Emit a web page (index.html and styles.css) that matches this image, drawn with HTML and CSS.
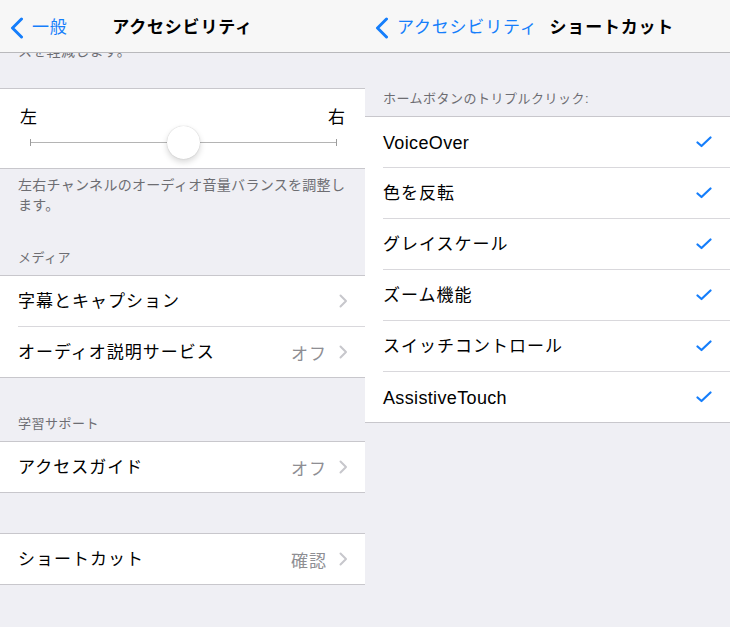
FILE: index.html
```html
<!DOCTYPE html>
<html lang="ja">
<head>
  <meta charset="UTF-8">
  <title>アクセシビリティ</title>
  <link rel="stylesheet" href="styles.css">
</head>
<body>
  <div class="screens">
    <!-- Accessibility settings -->
    <section class="screen">
      <header class="navbar">
        <a class="nav-back">
          <svg class="back-chevron" width="14" height="22" viewBox="0 0 14 22"><path d="M11.5 2 L2.5 11 L11.5 20"/></svg>
          <span>一般</span>
        </a>
        <h1 class="nav-title">アクセシビリティ</h1>
      </header>

      <div class="peek"><p class="group-footer">スを軽減します。</p></div>

      <div class="group balance">
        <div class="balance-labels"><span>左</span><span>右</span></div>
        <div class="slider">
          <div class="slider-track"></div>
          <div class="slider-thumb"></div>
        </div>
      </div>
      <p class="group-footer">左右チャンネルのオーディオ音量バランスを調整し<br>ます。</p>

      <h2 class="group-header first">メディア</h2>
      <div class="group">
        <div class="cell">
          <div class="cell-inner">
            <span class="cell-label">字幕とキャプション</span>
            <svg class="disclosure" width="9" height="14" viewBox="0 0 9 14"><path d="M1.5 1.5 L7 7 L1.5 12.5"/></svg>
          </div>
        </div>
        <div class="cell">
          <div class="cell-inner">
            <span class="cell-label">オーディオ説明サービス</span>
            <span class="cell-value">オフ</span>
            <svg class="disclosure" width="9" height="14" viewBox="0 0 9 14"><path d="M1.5 1.5 L7 7 L1.5 12.5"/></svg>
          </div>
        </div>
      </div>

      <h2 class="group-header">学習サポート</h2>
      <div class="group">
        <div class="cell">
          <div class="cell-inner">
            <span class="cell-label">アクセスガイド</span>
            <span class="cell-value">オフ</span>
            <svg class="disclosure" width="9" height="14" viewBox="0 0 9 14"><path d="M1.5 1.5 L7 7 L1.5 12.5"/></svg>
          </div>
        </div>
      </div>

      <div class="group spaced">
        <div class="cell">
          <div class="cell-inner">
            <span class="cell-label">ショートカット</span>
            <span class="cell-value">確認</span>
            <svg class="disclosure" width="9" height="14" viewBox="0 0 9 14"><path d="M1.5 1.5 L7 7 L1.5 12.5"/></svg>
          </div>
        </div>
      </div>
    </section>

    <!-- Shortcut selection -->
    <section class="screen">
      <header class="navbar navbar-left">
        <a class="nav-back">
          <svg class="back-chevron" width="14" height="22" viewBox="0 0 14 22"><path d="M11.5 2 L2.5 11 L11.5 20"/></svg>
          <span>アクセシビリティ</span>
        </a>
        <h1 class="nav-title">ショートカット</h1>
      </header>

      <h2 class="group-header">ホームボタンのトリプルクリック:</h2>
      <div class="group">
        <div class="cell"><div class="cell-inner"><span class="cell-label latin">VoiceOver</span><svg class="check" width="16" height="12" viewBox="0 0 16 12"><path d="M1.5 6.5 L5.5 10 L14.5 1.5"/></svg></div></div>
        <div class="cell"><div class="cell-inner"><span class="cell-label">色を反転</span><svg class="check" width="16" height="12" viewBox="0 0 16 12"><path d="M1.5 6.5 L5.5 10 L14.5 1.5"/></svg></div></div>
        <div class="cell"><div class="cell-inner"><span class="cell-label">グレイスケール</span><svg class="check" width="16" height="12" viewBox="0 0 16 12"><path d="M1.5 6.5 L5.5 10 L14.5 1.5"/></svg></div></div>
        <div class="cell"><div class="cell-inner"><span class="cell-label">ズーム機能</span><svg class="check" width="16" height="12" viewBox="0 0 16 12"><path d="M1.5 6.5 L5.5 10 L14.5 1.5"/></svg></div></div>
        <div class="cell"><div class="cell-inner"><span class="cell-label">スイッチコントロール</span><svg class="check" width="16" height="12" viewBox="0 0 16 12"><path d="M1.5 6.5 L5.5 10 L14.5 1.5"/></svg></div></div>
        <div class="cell"><div class="cell-inner"><span class="cell-label latin">AssistiveTouch</span><svg class="check" width="16" height="12" viewBox="0 0 16 12"><path d="M1.5 6.5 L5.5 10 L14.5 1.5"/></svg></div></div>
      </div>
    </section>
  </div>
</body>
</html>
```

FILE: styles.css
```css
* { box-sizing: border-box; margin: 0; padding: 0; }
html, body {
  width: 100%;
  height: 100%;
  background: #efeff4;
  font-family: "Liberation Sans", "Noto Sans CJK JP", sans-serif;
  color: #000;
  overflow: hidden;
}

.screens {
  display: flex;
  height: 627px;
}

.screen {
  width: 365px;
  flex-shrink: 0;
  background: #efeff4;
}

/* Navigation bar */
.navbar {
  height: 53px;
  padding-top: 4px;
  background: #f7f7f7;
  border-bottom: 1px solid #b9b9bc;
  display: grid;
  grid-template-columns: 1fr auto 1fr;
  align-items: center;
}
.navbar-left {
  display: flex;
}

.nav-back {
  display: flex;
  align-items: center;
  gap: 8px;
  padding-left: 10px;
  color: #157efb;
  font-size: 17px;
  letter-spacing: 0.8px;
  line-height: 22px;
}
.back-chevron path {
  fill: none;
  stroke: #157efb;
  stroke-width: 3;
  stroke-linecap: round;
  stroke-linejoin: round;
}

.nav-title {
  font-size: 17px;
  font-weight: 700;
  letter-spacing: 0.8px;
  line-height: 22px;
}
.navbar-left .nav-title { margin-left: 12px; }

/* Partially scrolled text under the bar */
.peek {
  height: 8px;
  overflow: hidden;
  margin-bottom: 27px;
}
.peek .group-footer { margin-top: -18px; }

/* Groups and cells */
.group {
  background: #fff;
  border-top: 1px solid #c8c7cc;
  border-bottom: 1px solid #c8c7cc;
}
.group.spaced { margin-top: 40px; }

.group-header {
  padding: 38px 18px 9px;
  font-size: 13px;
  font-weight: 400;
  letter-spacing: 0.5px;
  line-height: 16px;
  color: #6d6d72;
}
.group-header.first { padding-top: 35px; }

.group-footer {
  padding: 6px 16px 0 18px;
  font-size: 14px;
  letter-spacing: 0.3px;
  line-height: 20px;
  color: #6d6d72;
  white-space: nowrap;
}

.cell { padding-left: 18px; }
.cell-inner {
  height: 51px;
  display: flex;
  align-items: center;
  padding-right: 17px;
  border-bottom: 1px solid #d9d8dc;
}
.cell:last-child .cell-inner {
  height: 50px;
  border-bottom: none;
}

.cell-label {
  flex: 1;
  font-size: 17px;
  letter-spacing: 1px;
  line-height: 22px;
  padding-top: 1px;
}
.cell-label.latin {
  font-size: 18px;
  letter-spacing: 0.35px;
}

.cell-value {
  font-size: 17px;
  letter-spacing: 1px;
  color: #8e8e93;
  margin-right: 12px;
  padding-top: 1px;
}

.disclosure path {
  fill: none;
  stroke: #c7c7cc;
  stroke-width: 2;
  stroke-linecap: round;
  stroke-linejoin: round;
}

.check { margin-right: 1px; }
.check path {
  fill: none;
  stroke: #157efb;
  stroke-width: 2.2;
  stroke-linecap: round;
  stroke-linejoin: round;
}

/* Balance slider */
.balance { padding: 19px 20px 12px; }
.balance-labels {
  display: flex;
  justify-content: space-between;
  font-size: 17px;
  line-height: 20px;
}
.slider {
  position: relative;
  height: 28px;
  margin: 0 8px 0 10px;
  display: flex;
  align-items: center;
}
.slider-track {
  position: relative;
  width: 100%;
  height: 1px;
  background: #b4b4b4;
}
.slider-track::before,
.slider-track::after {
  content: "";
  position: absolute;
  top: -3px;
  width: 1px;
  height: 7px;
  background: #9c9c9c;
}
.slider-track::before { left: 0; }
.slider-track::after { right: 0; }

.slider-thumb {
  position: absolute;
  left: 50%;
  top: 50%;
  width: 33px;
  height: 33px;
  margin: -16.5px 0 0 -17px;
  border-radius: 50%;
  background: #fff;
  box-shadow: 0 3px 6px rgba(0,0,0,0.16), 0 0 1px rgba(0,0,0,0.25);
}
```
